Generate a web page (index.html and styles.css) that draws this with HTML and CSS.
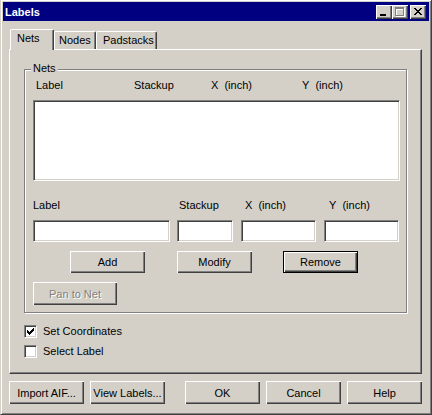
FILE: index.html
```html
<!DOCTYPE html>
<html>
<head>
<meta charset="utf-8">
<title>Labels</title>
<link rel="stylesheet" href="styles.css">
</head>
<body>
<div class="window">
  <div class="titlebar">
    <span class="title">Labels</span>
    <div class="caps">
      <span class="capbtn"><svg width="16" height="14" viewBox="0 0 16 14"><rect x="4" y="9" width="6" height="2" fill="#000"/></svg></span>
      <span class="capbtn"><svg width="16" height="14" viewBox="0 0 16 14"><path transform="translate(4 3)" fill="#fff" d="M0 0h9v2H0z M0 2h1v7H0z M8 2h1v7H8z M0 8h9v1H0z"/><path transform="translate(3 2)" fill="#808080" d="M0 0h9v2H0z M0 2h1v7H0z M8 2h1v7H8z M0 8h9v1H0z"/></svg></span>
      <span class="capbtn close"><svg width="16" height="14" viewBox="0 0 16 14"><path transform="translate(4 3)" fill="#000" d="M0 0h2v1H0z M6 0h2v1H6z M1 1h2v1H1z M5 1h2v1H5z M2 2h4v1H2z M3 3h2v1H3z M2 4h4v1H2z M1 5h2v1H1z M5 5h2v1H5z M0 6h2v1H0z M6 6h2v1H6z"/></svg></span>
    </div>
  </div>
  <div class="client">
    <div class="tabs">
      <div class="tab active t-nets">Nets</div>
      <div class="tab t-nodes">Nodes</div>
      <div class="tab t-pads">Padstacks</div>
    </div>
    <div class="panel">
      <div class="group">
        <span class="group-title">Nets</span>
        <div class="cols">
          <span class="c-label">Label</span>
          <span class="c-stack">Stackup</span>
          <span class="c-x">X&nbsp; (inch)</span>
          <span class="c-y">Y&nbsp; (inch)</span>
        </div>
        <div class="listbox"></div>
        <div class="flabels">
          <span class="f-label">Label</span>
          <span class="f-stack">Stackup</span>
          <span class="f-x">X&nbsp; (inch)</span>
          <span class="f-y">Y&nbsp; (inch)</span>
        </div>
        <div class="edits">
          <div class="edit e-label"></div>
          <div class="edit e-stack"></div>
          <div class="edit e-x"></div>
          <div class="edit e-y"></div>
        </div>
        <div class="actions">
          <button class="btn small">Add</button>
          <button class="btn small b-modify">Modify</button>
          <button class="btn small b-remove default">Remove</button>
        </div>
        <button class="btn pan" disabled>Pan to Net</button>
      </div>
      <div class="check first">
        <span class="box"><svg width="7" height="7" viewBox="0 0 7 7"><path fill="#000" d="M6 0h1v1H6z M5 1h2v1H5z M0 2h1v1H0z M4 2h3v1H4z M0 3h2v1H0z M3 3h3v1H3z M0 4h5v1H0z M1 5h3v1H1z M2 6h1v1H2z"/></svg></span>
        <span>Set Coordinates</span>
      </div>
      <div class="check second">
        <span class="box"></span>
        <span>Select Label</span>
      </div>
    </div>
    <div class="footer">
      <button class="btn">Import AIF...</button>
      <button class="btn b-view">View Labels...</button>
      <button class="btn b-ok">OK</button>
      <button class="btn b-next">Cancel</button>
      <button class="btn b-next">Help</button>
    </div>
  </div>
</div>
</body>
</html>
```
FILE: styles.css
```css
* { box-sizing: border-box; }
html, body { margin: 0; padding: 0; }
body {
  background: #d4d0c8;
  font-family: "Liberation Sans", Arial, sans-serif;
  font-size: 11px;
  line-height: 13px;
  color: #000;
}
.window {
  width: 432px;
  height: 415px;
  border: 1px solid;
  border-color: #d4d0c8 #404040 #404040 #d4d0c8;
  border-top-width: 0;
  box-shadow: inset 1px 1px #fff, inset -1px -1px #808080;
  padding: 2px;
  background: #d4d0c8;
  display: flex;
  flex-direction: column;
}
.titlebar {
  height: 19px;
  background: #000080;
  display: flex;
  align-items: flex-start;
  padding: 3px 3px 0 2px;
}
.title {
  flex: 1;
  color: #fff;
  font-weight: bold;
  line-height: 13px;
  padding-top: 1px;
}
.caps { display: flex; }
.capbtn {
  display: block;
  width: 16px;
  height: 14px;
  background: #d4d0c8;
  box-shadow: inset 1px 1px #fff, inset -1px -1px #404040, inset -2px -2px #808080;
}
.capbtn svg { display: block; }
.capbtn.close { margin-left: 2px; }

.client {
  flex: 1;
  display: flex;
  flex-direction: column;
  padding: 8px 7px 0 6px;
}
.tabs {
  height: 20px;
  display: flex;
  align-items: flex-end;
}
.tab {
  height: 18px;
  border: 1px solid;
  border-bottom: 0;
  border-color: #fff #404040 #404040 #fff;
  box-shadow: inset -1px 0 #808080;
  border-radius: 2px 2px 0 0;
  padding-top: 2px;
  background: #d4d0c8;
  white-space: nowrap;
}
.tab.active {
  height: 21px;
  margin-bottom: -1px;
  position: relative;
  z-index: 1;
}
.t-nets { margin-left: 1px; width: 44px; padding-left: 6px; }
.t-nodes { width: 42px; padding-left: 4px; }
.t-pads { width: 61px; padding-left: 6px; }

.panel {
  height: 325px;
  border: 1px solid;
  border-color: #fff #404040 #404040 #fff;
  box-shadow: inset -1px -1px #808080;
  padding: 19px 0 0 14px;
  display: flex;
  flex-direction: column;
}
.group {
  width: 383px;
  height: 244px;
  border: 1px solid #808080;
  box-shadow: inset 1px 1px #fff, 1px 1px #fff;
  padding-left: 8px;
  display: flex;
  flex-direction: column;
}
.group-title {
  align-self: flex-start;
  margin: -8px 0 0 -2px;
  padding: 0 2px;
  background: #d4d0c8;
}
.cols { display: flex; margin-top: 4px; }
.c-label { width: 101px; padding-left: 3px; }
.c-stack { width: 77px; }
.c-x { width: 91px; }

.listbox {
  margin-top: 8px;
  width: 367px;
  height: 81px;
  background: #fff;
  border: 1px solid;
  border-color: #808080 #fff #fff #808080;
  box-shadow: inset 1px 1px #404040, inset -1px -1px #d4d0c8;
}
.flabels { display: flex; margin-top: 18px; }
.f-label { width: 146px; }
.f-stack { width: 66px; }
.f-x { width: 84px; }

.edits { display: flex; margin-top: 8px; }
.edit {
  height: 22px;
  background: #fff;
  border: 1px solid;
  border-color: #808080 #fff #fff #808080;
  box-shadow: inset 1px 1px #404040, inset -1px -1px #d4d0c8;
}
.e-label { width: 137px; }
.e-stack { width: 56px; margin-left: 7px; }
.e-x { width: 75px; margin-left: 8px; }
.e-y { width: 75px; margin-left: 8px; }

.btn {
  width: 75px;
  height: 23px;
  padding: 0;
  border: 0;
  background: #d4d0c8;
  font-family: "Liberation Sans", Arial, sans-serif;
  font-size: 11px;
  color: #000;
  box-shadow: inset 1px 1px #fff, inset -1px -1px #404040, inset -2px -2px #808080;
}
.btn.small { height: 22px; }
.btn.default {
  box-shadow: inset 0 0 0 1px #000, inset 2px 2px #fff, inset -2px -2px #404040, inset -3px -3px #808080;
}
.actions { display: flex; margin-top: 9px; padding-left: 37px; }
.b-modify { margin-left: 32px; }
.b-remove { margin-left: 31px; }
.btn.pan {
  margin-top: 9px;
  width: 84px;
  color: #808080;
  text-shadow: 1px 1px #fff;
}

.check { display: flex; align-items: center; height: 13px; }
.check.first { margin-top: 12px; }
.check.second { margin-top: 7px; }
.box {
  width: 13px;
  height: 13px;
  margin-right: 6px;
  background: #fff;
  border: 1px solid;
  border-color: #808080 #fff #fff #808080;
  box-shadow: inset 1px 1px #404040, inset -1px -1px #d4d0c8;
  padding: 2px;
}
.box svg { display: block; }

.footer { display: flex; margin-top: 7px; }
.b-view { margin-left: 6px; }
.b-ok { margin-left: 20px; }
.b-next { margin-left: 6px; }
```
